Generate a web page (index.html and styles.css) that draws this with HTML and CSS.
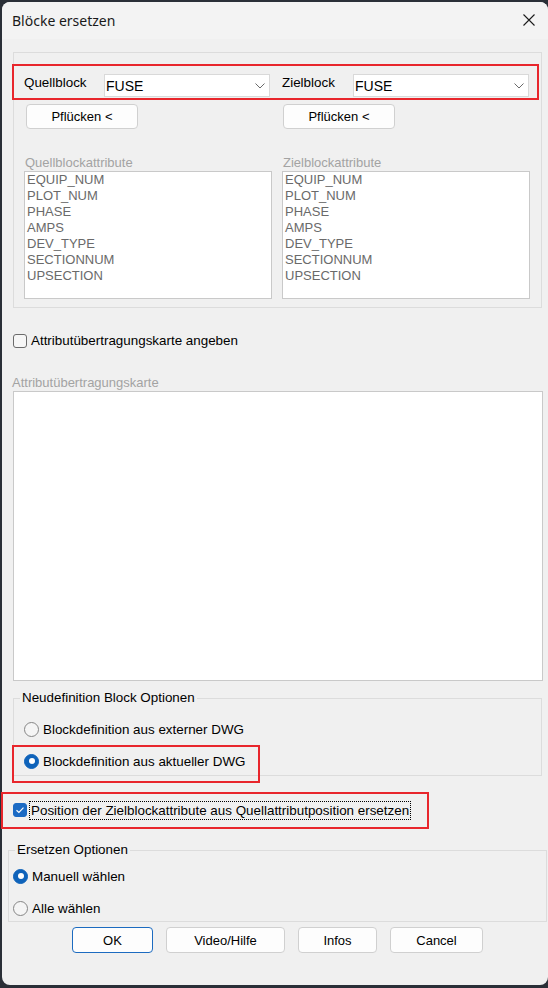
FILE: index.html
```html
<!DOCTYPE html>
<html lang="de">
<head>
<meta charset="utf-8">
<title>Blöcke ersetzen</title>
<link rel="stylesheet" href="styles.css">
</head>
<body>
<div class="window">
  <div class="titlebar">
    <span class="title">Blöcke ersetzen</span>
    <svg class="close" width="12" height="12" viewBox="0 0 12 12"><path d="M0.5 0.5 L11.5 11.5 M11.5 0.5 L0.5 11.5" stroke="#1b1b1b" stroke-width="1.1" fill="none"/></svg>
  </div>
  <div class="content">
    <div class="group1">
      <div class="cols">
        <div class="col">
          <div class="selrow">
            <span class="sellabel q">Quellblock</span>
            <div class="combo c1"><span class="combo-text">FUSE</span><svg class="chev" width="10" height="6" viewBox="0 0 10 6"><path d="M0.5 0.5 L5 5 L9.5 0.5" stroke="#6a6a6a" fill="none" stroke-width="1"/></svg></div>
          </div>
          <button class="btn pick p1">Pflücken &lt;</button>
          <div class="dislabel">Quellblockattribute</div>
          <ul class="listbox">
            <li>EQUIP_NUM</li><li>PLOT_NUM</li><li>PHASE</li><li>AMPS</li><li>DEV_TYPE</li><li>SECTIONNUM</li><li>UPSECTION</li>
          </ul>
        </div>
        <div class="col">
          <div class="selrow">
            <span class="sellabel z">Zielblock</span>
            <div class="combo c2"><span class="combo-text">FUSE</span><svg class="chev" width="10" height="6" viewBox="0 0 10 6"><path d="M0.5 0.5 L5 5 L9.5 0.5" stroke="#6a6a6a" fill="none" stroke-width="1"/></svg></div>
          </div>
          <button class="btn pick p2">Pflücken &lt;</button>
          <div class="dislabel">Zielblockattribute</div>
          <ul class="listbox">
            <li>EQUIP_NUM</li><li>PLOT_NUM</li><li>PHASE</li><li>AMPS</li><li>DEV_TYPE</li><li>SECTIONNUM</li><li>UPSECTION</li>
          </ul>
        </div>
      </div>
    </div>

    <div class="check chk1"><span class="cb"></span><span class="cb-text">Attributübertragungskarte angeben</span></div>
    <div class="dislabel maplabel">Attributübertragungskarte</div>
    <div class="textarea"></div>

    <fieldset class="grp grp2">
      <legend>Neudefinition Block Optionen</legend>
      <div class="radio r1"><span class="rb"></span><span>Blockdefinition aus externer DWG</span></div>
      <div class="radio r2"><span class="rb on"></span><span>Blockdefinition aus aktueller DWG</span></div>
    </fieldset>

    <div class="check chk2"><span class="cb on"><svg width="10" height="8" viewBox="0 0 10 8"><path d="M1.5 4.2 L3.9 6.4 L8.5 1.6" stroke="#ffffff" stroke-width="1.2" fill="none"/></svg></span><span class="cb-text focus">Position der Zielblockattribute aus Quellattributposition ersetzen</span></div>

    <fieldset class="grp grp3">
      <legend>Ersetzen Optionen</legend>
      <div class="radio r3"><span class="rb on"></span><span>Manuell wählen</span></div>
      <div class="radio r4"><span class="rb"></span><span>Alle wählen</span></div>
    </fieldset>

    <div class="buttons">
      <button class="btn b-ok">OK</button>
      <button class="btn b-video">Video/Hilfe</button>
      <button class="btn b-infos">Infos</button>
      <button class="btn b-cancel">Cancel</button>
    </div>
  </div>

  <div class="mark m1"></div>
  <div class="mark m2"></div>
  <div class="mark m3"></div>
</div>
</body>
</html>
```

FILE: styles.css
```css
html, body {
  margin: 0;
  padding: 0;
}
body {
  background: #2a2f37;
  width: 548px;
  height: 988px;
  overflow: hidden;
  font-family: "Liberation Sans", Arial, sans-serif;
  font-size: 13px;
  color: #000;
}
.window {
  position: relative;
  margin: 2px 0 0 2px;
  width: 546px;
  height: 983px;
  background: #f0f0f0;
  border-radius: 8px;
}
.titlebar {
  height: 37px;
  background: #f3f3f3;
  border-radius: 8px 8px 0 0;
  display: flex;
  align-items: center;
  padding-left: 10px;
  position: relative;
}
.title {
  font-family: "Noto Sans", "Open Sans", sans-serif;
  font-size: 14px;
  color: #1a1a1a;
  margin-top: -1px;
}
.close {
  position: absolute;
  left: 521px;
  top: 12px;
}
.content {
  display: flex;
  flex-direction: column;
  align-items: flex-start;
}
.group1 {
  margin: 13px 0 0 11px;
  width: 529px;
  box-sizing: border-box;
  border: 1px solid #dcdcdc;
  padding: 21px 0 8px 10px;
}
.cols {
  display: grid;
  grid-template-columns: 248px 248px;
  column-gap: 10px;
}
.col {
  display: flex;
  flex-direction: column;
  align-items: flex-start;
}
.selrow {
  display: flex;
  height: 23px;
}
.sellabel {
  line-height: 18px;
  font-size: 13.4px;
}
.sellabel.q { width: 80px; }
.sellabel.z { width: 71px; }
.combo {
  box-sizing: border-box;
  height: 23px;
  background: #fff;
  border: 1px solid #d9d9d9;
  display: flex;
  align-items: center;
  justify-content: space-between;
  padding: 0 4px 0 1px;
}
.combo.c1 { width: 166px; }
.combo.c2 { width: 176px; }
.combo-text {
  font-size: 14px;
  line-height: 21px;
  padding-top: 1px;
}
.chev { margin-top: 1px; }
.btn {
  box-sizing: border-box;
  background: #fdfdfd;
  border: 1px solid #d0d0d0;
  border-radius: 4px;
  font-family: "Liberation Sans", Arial, sans-serif;
  font-size: 13px;
  color: #000;
  padding: 0;
  height: 26px;
}
.pick {
  margin-top: 7px;
  width: 112px;
  height: 25px;
}
.pick.p1 { margin-left: 2px; }
.pick.p2 { margin-left: 1px; }
.dislabel {
  color: #a3a3a3;
  line-height: 17px;
  font-size: 13px;
}
.col .dislabel {
  margin-top: 25px;
  padding-left: 1px;
}
.listbox {
  box-sizing: border-box;
  width: 248px;
  height: 128px;
  margin: 0;
  padding: 0 0 0 2px;
  list-style: none;
  background: #fff;
  border: 1px solid #c9c9c9;
}
.listbox li {
  line-height: 16px;
  color: #6a6a6a;
}
.check {
  display: flex;
  align-items: center;
}
.cb {
  box-sizing: border-box;
  width: 14px;
  height: 14px;
  border: 1px solid #6b6b6b;
  border-radius: 3px;
  background: #f6f6f6;
  display: flex;
  align-items: center;
  justify-content: center;
}
.cb.on {
  background: #1b6ac4;
  border-color: #1b6ac4;
}
.cb-text {
  line-height: 16px;
  font-size: 13.4px;
}
.chk1 {
  margin: 25px 0 0 11px;
  height: 15px;
}
.chk1 .cb-text { margin-left: 4px; }
.maplabel {
  margin: 26px 0 0 10px;
}
.textarea {
  margin-left: 11px;
  width: 530px;
  height: 290px;
  box-sizing: border-box;
  background: #fff;
  border: 1px solid #c9c9c9;
}
.grp {
  box-sizing: border-box;
  border: 1px solid #dcdcdc;
  margin: 0;
  min-width: 0;
  font-size: 13.4px;
}
.grp legend {
  padding: 0 2px;
  line-height: 16px;
  font-size: 13.4px;
}
.grp2 {
  margin: 9px 0 0 11px;
  width: 529px;
  padding: 0 0 4px 10px;
}
.grp2 legend { margin-left: -4px; }
.radio {
  display: flex;
  align-items: center;
  height: 20px;
}
.radio .rb { margin-right: 4px; }
.r1 { margin-top: 13px; }
.r2 { margin-top: 12px; }
.rb {
  box-sizing: border-box;
  width: 15px;
  height: 15px;
  border-radius: 50%;
  border: 1px solid #868686;
  background: #f5f5f5;
  position: relative;
}
.rb.on {
  background: #0f63ba;
  border-color: #0f63ba;
}
.rb.on::after {
  content: "";
  position: absolute;
  left: 3.5px;
  top: 3.5px;
  width: 6px;
  height: 6px;
  border-radius: 50%;
  background: #fff;
}
.chk2 {
  margin: 24px 0 0 11px;
  height: 20px;
}
.focus {
  margin-left: 3px;
  outline: 1px dotted #000;
  padding: 1px 1px;
  line-height: 15px;
}
.grp3 {
  margin: 22px 0 0 6px;
  width: 539px;
  padding: 0 0 3px 4px;
}
.grp3 legend { margin-left: 2px; }
.r3 { margin-top: 8px; }
.r4 { margin-top: 12px; }
.buttons {
  display: flex;
  gap: 13px;
  margin: 5px 0 0 70px;
}
.b-ok { width: 81px; border-color: #1c6bc0; }
.b-video { width: 119px; }
.b-infos { width: 79px; }
.b-cancel { width: 93px; }
.mark {
  position: absolute;
  border: 2px solid #e8262c;
  box-sizing: border-box;
  pointer-events: none;
}
.m1 { left: 10px; top: 62px; width: 527px; height: 36px; }
.m2 { left: 10px; top: 743px; width: 248px; height: 38px; }
.m3 { left: -1px; top: 790px; width: 428px; height: 37px; }
```
